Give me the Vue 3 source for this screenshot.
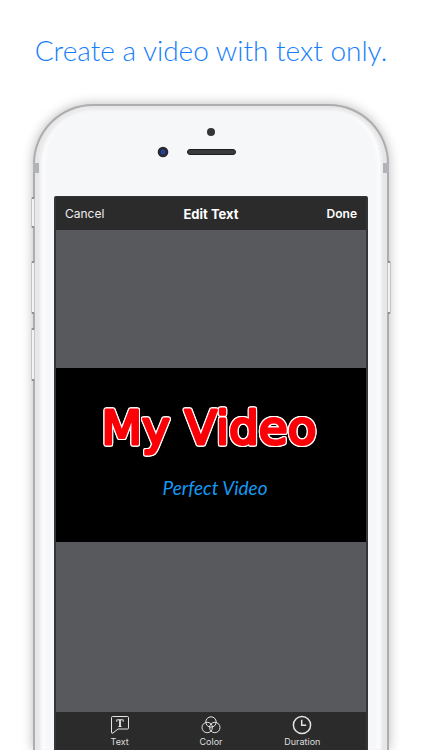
<script setup>
const leftKeys = ['mute', 'up', 'down']
const tools = [
  { id: 'text', label: 'Text' },
  { id: 'color', label: 'Color' },
  { id: 'duration', label: 'Duration' },
]
</script>

<template>
  <main class="page">
    <h1 class="headline">Create a video with text only.</h1>

    <div class="stage">
      <div class="phone">
        <i class="band band-left"></i>
        <i class="band band-right"></i>
        <i v-for="key in leftKeys" :key="key" class="key" :class="key"></i>
        <i class="key power"></i>

        <div class="face">
          <div class="sensors">
            <i class="proximity"></i>
            <div class="ear">
              <svg class="camera" viewBox="0 0 12 12" aria-hidden="true">
                <circle cx="6" cy="6" r="5.3" fill="#292a2f" />
                <circle cx="6" cy="6" r="3.2" fill="#1d2d5e" />
                <circle cx="6" cy="6" r="2" fill="#2c54b0" />
                <circle cx="6" cy="6" r="0.8" fill="#10182f" />
              </svg>
              <i class="speaker"></i>
            </div>
          </div>

          <section class="screen">
            <header class="bar">
              <button type="button" class="action">Cancel</button>
              <h2 class="title">Edit Text</h2>
              <button type="button" class="action done">Done</button>
            </header>

            <div class="editor">
              <div class="canvas">
                <svg class="art" viewBox="0 0 310 174">
                  <text class="main-text" x="153" y="76">My Video</text>
                  <text class="sub-text" x="159" y="127">Perfect Video</text>
                </svg>
              </div>
            </div>

            <nav class="tools">
              <button v-for="tool in tools" :key="tool.id" type="button" class="tool">
                <svg v-if="tool.id === 'text'" class="icon" viewBox="0 0 20 20" aria-hidden="true">
                  <path d="M2.5 1.5H17.5Q18.5 1.5 18.5 2.5V13Q18.5 14 17.5 14H8L3 18Q1.5 19 1.5 17V2.5Q1.5 1.5 2.5 1.5Z" />
                  <path d="M6.8 6.8V4.8H13.2V6.8M8.4 11.5H11.6" />
                  <path class="stem" d="M10 4.8V11.5" />
                </svg>
                <svg v-else-if="tool.id === 'color'" class="icon" viewBox="0 0 20 20" aria-hidden="true">
                  <circle cx="10" cy="7" r="5.2" />
                  <circle cx="6.2" cy="12.5" r="5.2" />
                  <circle cx="13.8" cy="12.5" r="5.2" />
                </svg>
                <svg v-else class="icon clock" viewBox="0 0 20 20" aria-hidden="true">
                  <circle cx="10" cy="10" r="8.6" />
                  <path d="M9.7 4.8V10.2H14.2" />
                </svg>
                <span>{{ tool.label }}</span>
              </button>
            </nav>
          </section>
        </div>
      </div>
    </div>
  </main>
</template>

<style>
body {
  margin: 0;
  background: #fff;
}
</style>

<style scoped>
.page {
  display: flex;
  flex-direction: column;
  min-height: 100vh;
  overflow: hidden;
  background: #fff;
  font-family: Inter, "Liberation Sans", sans-serif;
}
.headline {
  margin: 0;
  padding: 32px 0 36px;
  color: #157efb;
  font: 300 28px/36px Lato, sans-serif;
  text-align: center;
}
.stage {
  display: flex;
  flex: 1;
  padding: 0 33px;
}
.phone {
  position: relative;
  display: flex;
  flex: 1;
  box-sizing: border-box;
  padding: 2px 4px 0;
  border: 2px solid #adadae;
  border-bottom: 0;
  border-radius: 60px 60px 0 0;
  background: #e7e7e9;
  box-shadow: 0 0 12px rgba(0, 0, 0, 0.28);
}
.face {
  display: flex;
  flex: 1;
  flex-direction: column;
  box-sizing: border-box;
  padding: 19px 15px 0;
  border-radius: 54px 54px 0 0;
  background: #f6f7f9;
  box-shadow: inset 2px 2px 3px #e9e9eb, inset -2px 0 3px #e9e9eb, inset 5px 0 5px #fff, inset -5px 0 5px #fff;
}
.band {
  position: absolute;
  top: 57px;
  width: 6px;
  height: 10px;
  background: #b2b3b7;
}
.band-left {
  left: -2px;
}
.band-right {
  right: -2px;
}
.key {
  position: absolute;
  left: -4px;
  box-sizing: border-box;
  width: 4px;
  height: 53px;
  border: solid;
  border-width: 2px 1px;
  border-color: #8c8c8d #c4c4c5;
  border-radius: 2px;
  background: #f2f2f3;
}
.mute {
  top: 91px;
  height: 31px;
}
.up {
  top: 155px;
}
.down {
  top: 222px;
}
.power {
  top: 155px;
  right: -4px;
  left: auto;
}
.sensors {
  display: flex;
  flex-direction: column;
  align-items: center;
  gap: 10px;
  padding: 1px 0 38px;
}
.proximity {
  width: 8px;
  height: 8px;
  border-radius: 50%;
  background: #353536;
}
.ear {
  display: flex;
  align-items: center;
  gap: 18px;
  padding-right: 30px;
}
.camera {
  width: 12px;
  height: 12px;
}
.speaker {
  box-sizing: border-box;
  width: 49px;
  height: 6px;
  border: 1px solid #1d1d1e;
  border-radius: 3px;
  background: #3b3b3c;
}
.screen {
  display: flex;
  flex: 1;
  flex-direction: column;
  border: 2px solid #343538;
  border-width: 1px 2px 0;
  border-radius: 2px 2px 0 0;
  background: #2b2b2c;
}
.bar {
  display: grid;
  grid-template-columns: 1fr auto 1fr;
  align-items: center;
  height: 33px;
  padding: 0 9px;
  color: #fff;
}
.title {
  margin: 0;
  font-size: 13px;
  font-weight: 700;
}
.action {
  justify-self: start;
  padding: 0;
  border: 0;
  background: none;
  color: #eee;
  font: 400 12px/20px Inter, sans-serif;
}
.done {
  justify-self: end;
  color: #fff;
  font-weight: 600;
}
.editor {
  display: flex;
  flex: 1;
  flex-direction: column;
  background: #58595d;
}
.editor::before {
  flex: 138;
  content: "";
}
.editor::after {
  flex: 170;
  content: "";
}
.canvas {
  background: #000;
}
.art {
  display: block;
  width: 100%;
}
.art text {
  text-anchor: middle;
}
.main-text {
  fill: #fb0007;
  stroke: #fb0007;
  stroke-width: 3px;
  stroke-linecap: round;
  stroke-linejoin: round;
  font: 400 47px "DejaVu Sans", sans-serif;
  filter: drop-shadow(1px 0 0 #fff) drop-shadow(-1px 0 0 #fff) drop-shadow(0 1px 0 #fff) drop-shadow(0 -1px 0 #fff);
}
.sub-text {
  fill: #1599f2;
  font: italic 400 19px Lato, sans-serif;
}
.tools {
  display: flex;
  justify-content: space-around;
  padding: 3px 18px 2px;
}
.tool {
  display: flex;
  flex: 1;
  flex-direction: column;
  align-items: center;
  gap: 1px;
  padding: 0;
  border: 0;
  background: none;
  color: #dededf;
  font: 400 9px/12px Inter, sans-serif;
}
.icon {
  width: 20px;
  height: 20px;
  fill: none;
  stroke: #e4e4e4;
  stroke-width: 1;
}
.stem {
  stroke-width: 1.8;
}
.clock {
  stroke-width: 1.5;
}
</style>
